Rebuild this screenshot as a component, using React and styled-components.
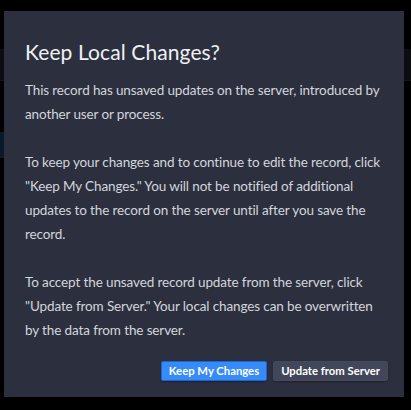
import React from 'react';
import styled, { createGlobalStyle } from 'styled-components';

const GlobalStyle = createGlobalStyle`
  html, body {
    margin: 0;
    padding: 0;
    background: #000;
  }
  body {
    font-family: Lato, "Noto Sans", sans-serif;
    -webkit-font-smoothing: antialiased;
  }
`;

const Page = styled.div`
  position: relative;
  width: 411px;
  height: 410px;
  overflow: hidden;
  background: #000;
`;

const AppBehind = styled.div`
  display: flex;
  flex-direction: column;
  padding-top: 49px;
`;

const HeaderBand = styled.div`
  height: 31px;
  background: #0b0d12;
  border-bottom: 1px solid #111419;
`;

const SideTab = styled.div`
  margin-top: 51px;
  width: 6px;
  height: 26px;
  background: #0b1a2b;
`;

const Overlay = styled.div`
  position: absolute;
  inset: 0;
  padding: 11px 7px 13px 4px;
  display: flex;
  align-items: flex-start;
`;

const Dialog = styled.div`
  width: 400px;
  height: 386px;
  box-sizing: border-box;
  background: #2c303e;
  padding: 28px 16px 16px 21px;
  display: flex;
  flex-direction: column;
`;

const Title = styled.h2`
  margin: 0 0 13px;
  font-size: 21px;
  font-weight: 400;
  line-height: 26px;
  color: #eef0f4;
  letter-spacing: 0.1px;
`;

const Body = styled.div`
  flex: 1;
  color: #d2d5dc;
  font-size: 13.5px;
  letter-spacing: -0.12px;
  line-height: 24px;
`;

const Paragraph = styled.p`
  margin: 0 0 24px;
  white-space: nowrap;

  &:last-child {
    margin-bottom: 0;
  }
`;

const Actions = styled.div`
  display: flex;
  justify-content: flex-end;
  gap: 6px;
`;

const Button = styled.button`
  box-sizing: border-box;
  height: 20px;
  padding: 0 7px;
  border-radius: 2px;
  font-family: Lato, "Noto Sans", sans-serif;
  font-size: 11.3px;
  font-weight: 700;
  line-height: 18px;
  color: #fff;
  cursor: pointer;
  border: 1px solid ${(p) => (p.$primary ? '#1f63d6' : '#434a5c')};
  background: ${(p) => (p.$primary ? '#358bf7' : '#414758')};
  box-shadow: 0 1px 2px rgba(0, 0, 0, 0.35);
`;

export default function App() {
  return (
    <Page>
      <GlobalStyle />
      <AppBehind>
        <HeaderBand />
        <SideTab />
      </AppBehind>
      <Overlay>
        <Dialog role="dialog">
          <Title>Keep Local Changes?</Title>
          <Body>
            <Paragraph>
              This record has unsaved updates on the server, introduced by
              <br />
              another user or process.
            </Paragraph>
            <Paragraph>
              To keep your changes and to continue to edit the record, click
              <br />
              "Keep My Changes." You will not be notified of additional
              <br />
              updates to the record on the server until after you save the
              <br />
              record.
            </Paragraph>
            <Paragraph>
              To accept the unsaved record update from the server, click
              <br />
              "Update from Server." Your local changes can be overwritten
              <br />
              by the data from the server.
            </Paragraph>
          </Body>
          <Actions>
            <Button $primary>Keep My Changes</Button>
            <Button>Update from Server</Button>
          </Actions>
        </Dialog>
      </Overlay>
    </Page>
  );
}
